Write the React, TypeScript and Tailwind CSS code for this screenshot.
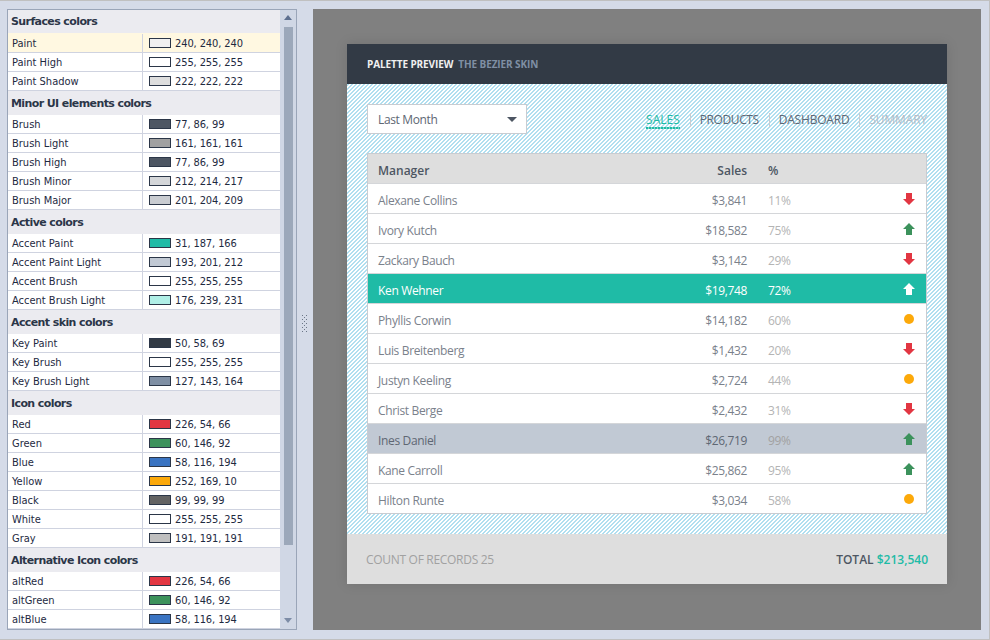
const sections: { title: string; rows: [string, string][] }[] = [
  {
    title: "Surfaces colors",
    rows: [
      ["Paint", "240, 240, 240"],
      ["Paint High", "255, 255, 255"],
      ["Paint Shadow", "222, 222, 222"],
    ],
  },
  {
    title: "Minor UI elements colors",
    rows: [
      ["Brush", "77, 86, 99"],
      ["Brush Light", "161, 161, 161"],
      ["Brush High", "77, 86, 99"],
      ["Brush Minor", "212, 214, 217"],
      ["Brush Major", "201, 204, 209"],
    ],
  },
  {
    title: "Active colors",
    rows: [
      ["Accent Paint", "31, 187, 166"],
      ["Accent Paint Light", "193, 201, 212"],
      ["Accent Brush", "255, 255, 255"],
      ["Accent Brush Light", "176, 239, 231"],
    ],
  },
  {
    title: "Accent skin colors",
    rows: [
      ["Key Paint", "50, 58, 69"],
      ["Key Brush", "255, 255, 255"],
      ["Key Brush Light", "127, 143, 164"],
    ],
  },
  {
    title: "Icon colors",
    rows: [
      ["Red", "226, 54, 66"],
      ["Green", "60, 146, 92"],
      ["Blue", "58, 116, 194"],
      ["Yellow", "252, 169, 10"],
      ["Black", "99, 99, 99"],
      ["White", "255, 255, 255"],
      ["Gray", "191, 191, 191"],
    ],
  },
  {
    title: "Alternative Icon colors",
    rows: [
      ["altRed", "226, 54, 66"],
      ["altGreen", "60, 146, 92"],
      ["altBlue", "58, 116, 194"],
    ],
  },
];

type Mark = "down" | "up" | "dot";

const people: { name: string; sales: string; pct: string; mark: Mark; kind?: "accent" | "muted" }[] = [
  { name: "Alexane Collins", sales: "$3,841", pct: "11%", mark: "down" },
  { name: "Ivory Kutch", sales: "$18,582", pct: "75%", mark: "up" },
  { name: "Zackary Bauch", sales: "$3,142", pct: "29%", mark: "down" },
  { name: "Ken Wehner", sales: "$19,748", pct: "72%", mark: "up", kind: "accent" },
  { name: "Phyllis Corwin", sales: "$14,182", pct: "60%", mark: "dot" },
  { name: "Luis Breitenberg", sales: "$1,432", pct: "20%", mark: "down" },
  { name: "Justyn Keeling", sales: "$2,724", pct: "44%", mark: "dot" },
  { name: "Christ Berge", sales: "$2,432", pct: "31%", mark: "down" },
  { name: "Ines Daniel", sales: "$26,719", pct: "99%", mark: "up", kind: "muted" },
  { name: "Kane Carroll", sales: "$25,862", pct: "95%", mark: "up" },
  { name: "Hilton Runte", sales: "$3,034", pct: "58%", mark: "dot" },
];

function StatusMark({ mark, white }: { mark: Mark; white: boolean }) {
  if (mark === "dot") {
    return <div className="w-[10px] h-[10px] rounded-full bg-[#fca90a] mr-[1px]" />;
  }
  const color = white ? "#ffffff" : mark === "up" ? "#3c925c" : "#e23642";
  return (
    <svg width="12" height="12" viewBox="0 0 12 12">
      <path d={mark === "up" ? "M6 0 L12 6 H9 V12 H3 V6 H0 Z" : "M3 0 H9 V6 H12 L6 12 L0 6 H3 Z"} fill={color} />
    </svg>
  );
}

function PaletteList() {
  return (
    <div className="w-[290px] h-[621px] border border-[#9aa5b8] flex bg-[#d0d7e5] overflow-hidden">
      <div className="w-[272px] overflow-hidden font-['DejaVu_Sans_Condensed','Roboto',sans-serif] text-[11px] text-[#1e2a3f]">
        {sections.map((section, i) => (
          <div key={section.title}>
            <div
              className={`bg-[#ebebf0] pl-[3px] pt-[2px] flex items-center font-['DejaVu_Sans',sans-serif] font-bold text-[#2b3648] -tracking-[0.6px] ${
                i === 0 ? "h-[23px]" : "h-[24px]"
              }`}
            >
              {section.title}
            </div>
            {section.rows.map(([name, rgb]) => (
              <div
                key={name}
                className={`flex border-b border-[#cfd3e0] ${name === "Paint" ? "h-[20px] pt-[1px] bg-[#fff8e1]" : "h-[19px] bg-white"}`}
              >
                <div className="w-[135px] pl-[4px] border-r border-[#cfd3e0] flex items-center leading-none">{name}</div>
                <div className="flex items-center pl-[6px]">
                  <div
                    className="w-[22px] h-[10px] border border-[#2b3648] mr-[4px]"
                    style={{ backgroundColor: `rgb(${rgb})` }}
                  />
                  <span className="leading-none -tracking-[0.1px]">{rgb}</span>
                </div>
              </div>
            ))}
          </div>
        ))}
      </div>
      <div className="w-[16px] flex flex-col items-center relative">
        <div className="mt-[5px] w-0 h-0 border-x-[4px] border-x-transparent border-b-[5px] border-b-[#5d6f8f]" />
        <div className="w-[9px] h-[518px] mt-[7px] bg-[#9ca8ba]" />
        <div className="mt-auto mb-[6px] w-0 h-0 border-x-[4px] border-x-transparent border-t-[5px] border-t-[#7d8ca6]" />
      </div>
    </div>
  );
}

function Splitter() {
  return (
    <div className="w-[16px] flex items-center justify-center">
      <svg width="6" height="18" viewBox="0 0 6 18" fill="#6b7687">
        <rect x="0" y="0" width="1" height="1" />
        <rect x="4" y="0" width="1" height="1" />
        <rect x="2" y="2" width="1" height="1" />
        <rect x="0" y="4" width="1" height="1" />
        <rect x="4" y="4" width="1" height="1" />
        <rect x="2" y="6" width="1" height="1" />
        <rect x="0" y="8" width="1" height="1" />
        <rect x="4" y="8" width="1" height="1" />
        <rect x="2" y="10" width="1" height="1" />
        <rect x="0" y="12" width="1" height="1" />
        <rect x="4" y="12" width="1" height="1" />
        <rect x="2" y="14" width="1" height="1" />
        <rect x="0" y="16" width="1" height="1" />
        <rect x="4" y="16" width="1" height="1" />
      </svg>
    </div>
  );
}

function PreviewCard() {
  return (
    <div className="w-[600px] h-[540px] flex flex-col shadow-[0_0_12px_rgba(0,0,0,0.12)] font-['Open_Sans',sans-serif]">
      <div className="h-[40px] shrink-0 bg-[#323a45] flex items-center pl-[20px] text-[10px] font-bold uppercase -tracking-[0.1px]">
        <span className="text-[#f0f0f0]">Palette Preview</span>
        <span className="ml-[5px] text-[#7f8fa4]">The Bezier Skin</span>
      </div>

      <div className="flex-1 px-[20px] pt-[20px] bg-[linear-gradient(135deg,#b0dff0_25%,#ffffff_25%,#ffffff_50%,#b0dff0_50%,#b0dff0_75%,#ffffff_75%)] bg-[length:4px_4px]">
        <div className="flex justify-between h-[30px]">
          <div className="w-[160px] bg-white border border-[#c9ccd1] flex items-center justify-between pl-[10px] pr-[9px] pt-[2px] text-[12px] -tracking-[0.35px] text-[#5e6773]">
            <span>Last Month</span>
            <div className="w-0 h-0 border-x-[5px] border-x-transparent border-t-[5px] border-t-[#4d5663] -mt-[2px]" />
          </div>
          <div className="flex items-center text-[12px] uppercase text-[#5e6773] h-[30px] pt-[2px]">
            <div className="flex flex-col text-[#1fbba6]">
              <span className="leading-[15px] pt-[1px]">Sales</span>
              <div className="h-[2px] bg-[repeating-linear-gradient(90deg,#1fbba6_0px,#1fbba6_2px,#7fd8cc_2px,#7fd8cc_3px)]" />
            </div>
            <span className="w-px h-[14px] bg-[#c9ccd1] ml-[10px] mr-[9px]" />
            <span className="-tracking-[0.4px]">Products</span>
            <span className="w-px h-[14px] bg-[#c9ccd1] ml-[10px] mr-[9px]" />
            <span className="-tracking-[0.2px]">Dashboard</span>
            <span className="w-px h-[14px] bg-[#c9ccd1] ml-[10px] mr-[9px]" />
            <span className="text-[#b4bcc7] -tracking-[0.15px]">Summary</span>
          </div>
        </div>

        <div className="mt-[19px] border border-[#c9ccd1] bg-white text-[12px]">
          <div className="h-[29px] pt-[4px] bg-[#dedede] flex items-center font-semibold text-[#4d5663]">
            <div className="flex-1 pl-[10px]">Manager</div>
            <div className="w-[80px] text-right">Sales</div>
            <div className="w-[60px] pl-[21px]">%</div>
            <div className="w-[119px]" />
          </div>
          {people.map((p) => {
            const accent = p.kind === "accent";
            const muted = p.kind === "muted";
            return (
              <div
                key={p.name}
                className={`h-[30px] pt-[4px] flex items-center border-t border-[#d4d6d9] -tracking-[0.35px] ${
                  accent ? "bg-[#1fbba6] text-white" : muted ? "bg-[#c1c9d4] text-[#5e6773]" : "text-[#7a818b]"
                }`}
              >
                <div className="flex-1 pl-[10px]">{p.name}</div>
                <div className="w-[80px] text-right">{p.sales}</div>
                <div className={`w-[60px] pl-[21px] ${accent ? "text-white" : muted ? "text-[#a1a1a1]" : "text-[#b4b4b4]"}`}>{p.pct}</div>
                <div className="w-[119px] flex justify-end pr-[11px] -mt-[4px]">
                  <StatusMark mark={p.mark} white={accent} />
                </div>
              </div>
            );
          })}
        </div>
      </div>

      <div className="h-[50px] pt-[2px] shrink-0 bg-[#dedede] flex items-center justify-between pl-[19px] pr-[19px] text-[12px] uppercase">
        <span className="text-[#a1a1a1] -tracking-[0.3px]">Count of records 25</span>
        <span className="font-semibold text-[#4d5663]">
          Total <span className="text-[#1fbba6]">$213,540</span>
        </span>
      </div>
    </div>
  );
}

export default function App() {
  return (
    <div className="w-[990px] h-[640px] bg-[#d5dbe8] border-t border-b border-r border-[#c0c0c0] pl-[7px] pt-[8px] flex overflow-hidden">
      <PaletteList />
      <Splitter />
      <div className="w-[668px] h-[621px] bg-[#808080] flex items-start justify-center pt-[35px]">
        <PreviewCard />
      </div>
    </div>
  );
}
